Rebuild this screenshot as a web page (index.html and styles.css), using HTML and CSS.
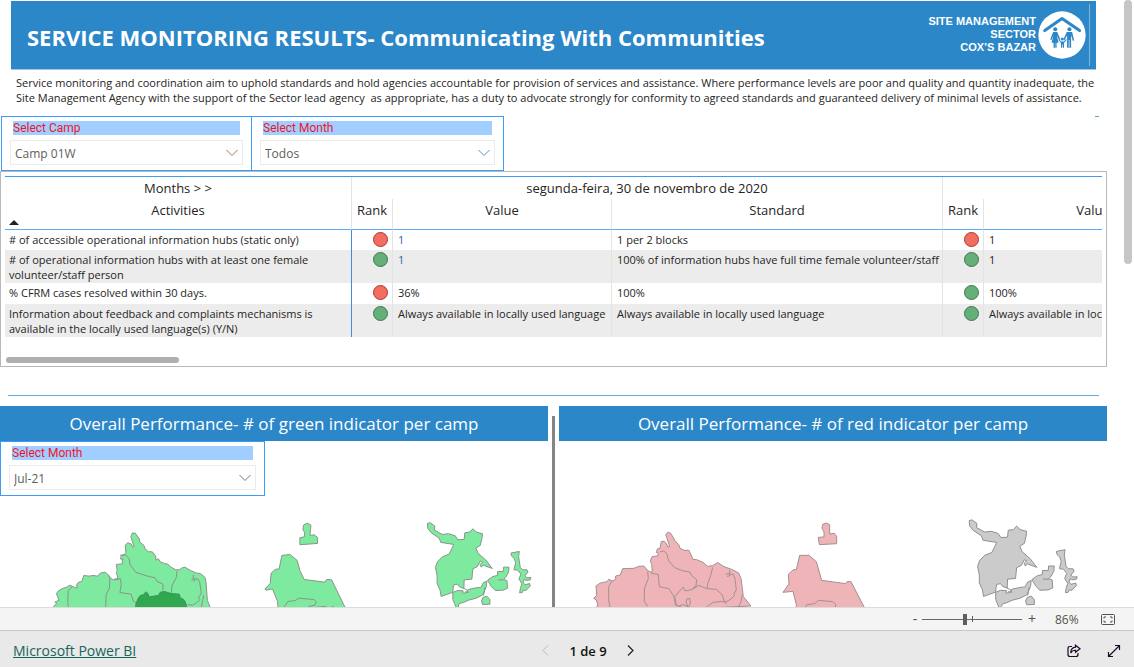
FILE: index.html
```html
<!DOCTYPE html>
<html lang="en">
<head>
<meta charset="utf-8">
<title>Service Monitoring Results</title>
<link rel="stylesheet" href="styles.css">
</head>
<body>
<div class="app">
  <main class="viewport">
    <div class="report">
      <header class="banner">
        <h1 class="banner-title">SERVICE MONITORING RESULTS- Communicating With Communities</h1>
        <div class="brand">
          <p class="brand-name">SITE MANAGEMENT<br>SECTOR<br>COX’S BAZAR</p>
          <svg class="brand-logo" viewBox="0 0 142 142" aria-hidden="true">
            <circle cx="71" cy="71" r="70" fill="#fff"/>
            <path d="M20 58 71 22l52 36" fill="none" stroke="#2b87c8" stroke-width="9" stroke-linecap="round" stroke-linejoin="round"/>
            <g fill="#2b87c8">
              <circle cx="51" cy="54" r="6"/>
              <path d="M45 62h12l9 22-4 2-7-14 6 22h-6v15h-4V94h-1v15h-4V94h-6l6-22-6 14-4-2z"/>
              <circle cx="93" cy="54" r="6"/>
              <path d="M85 62h16l6 25-4 1-5-16v37h-5V86h-2v23h-5V72l-7 14-4-2z"/>
              <circle cx="72" cy="83" r="4.500"/>
              <path d="M62 84l7 6h7l7-7 2 2-8 9v15h-4V99h-2v10h-3V94l-8-8z"/>
            </g>
          </svg>
          <span class="brand-rule"></span>
        </div>
      </header>

      <p class="intro">Service monitoring and coordination aim to uphold standards and hold agencies accountable for provision of services and assistance. Where performance levels are poor and quality and quantity inadequate, the<br>Site Management Agency with the support of the Sector lead agency&nbsp; as appropriate, has a duty to advocate strongly for conformity to agreed standards and guaranteed delivery of minimal levels of assistance.</p>

      <div class="filters">
        <div class="slicer slicer-camp">
          <label class="slicer-label" for="camp">Select Camp</label>
          <div class="slicer-box">
            <select class="slicer-select" id="camp"><option>Camp 01W</option></select>
            <svg class="chevron warm" viewBox="0 0 12 8" aria-hidden="true"><path d="M0.500 1 6 6.500 11.500 1"/></svg>
          </div>
        </div>
        <div class="slicer slicer-month">
          <label class="slicer-label" for="month">Select Month</label>
          <div class="slicer-box">
            <select class="slicer-select" id="month"><option>Todos</option></select>
            <svg class="chevron cool" viewBox="0 0 12 8" aria-hidden="true"><path d="M0.500 1 6 6.500 11.500 1"/></svg>
          </div>
        </div>
        <span class="dash"></span>
      </div>

      <section class="matrix">
        <div class="matrix-clip">
          <table class="grid">
            <colgroup><col class="c-act"><col class="c-rank"><col class="c-val"><col class="c-std"><col class="c-rank"><col class="c-val"></colgroup>
            <thead>
              <tr class="head-top"><th>Months &gt; &gt;</th><th colspan="3">segunda-feira, 30 de novembro de 2020</th><th colspan="2"></th></tr>
              <tr class="head-sub"><th>Activities<span class="sort"></span></th><th>Rank</th><th>Value</th><th>Standard</th><th>Rank</th><th>Value</th></tr>
            </thead>
            <tbody>
              <tr class="first"><th scope="row"># of accessible operational information hubs (static only)</th><td><i class="dot red"></i></td><td class="blue">1</td><td>1 per 2 blocks</td><td><i class="dot red"></i></td><td>1</td></tr>
              <tr class="alt"><th scope="row"># of operational information hubs with at least one female<br>volunteer/staff person</th><td><i class="dot green"></i></td><td class="blue">1</td><td>100% of information hubs have full time female volunteer/staff</td><td><i class="dot green"></i></td><td>1</td></tr>
              <tr><th scope="row">% CFRM cases resolved within 30 days.</th><td><i class="dot red"></i></td><td>36%</td><td>100%</td><td><i class="dot green"></i></td><td>100%</td></tr>
              <tr class="alt"><th scope="row">Information about feedback and complaints mechanisms is<br>available in the locally used language(s) (Y/N)</th><td><i class="dot green"></i></td><td>Always available in locally used language</td><td>Always available in locally used language</td><td><i class="dot green"></i></td><td>Always available in locally used language</td></tr>
            </tbody>
          </table>
        </div>
        <div class="hscroll"></div>
      </section>

      <hr class="rule">

      <div class="panels">
        <section class="panel">
          <h2 class="panel-title">Overall Performance- # of green indicator per camp</h2>
          <div class="slicer slicer-wide">
            <label class="slicer-label" for="month2">Select Month</label>
            <div class="slicer-box">
              <select class="slicer-select" id="month2"><option>Jul-21</option></select>
              <svg class="chevron" viewBox="0 0 12 8" aria-hidden="true"><path d="M0.500 1 6 6.500 11.500 1"/></svg>
            </div>
          </div>
          <svg class="map map-green" viewBox="0 1488 1641 360" role="img" aria-label="Green indicators map">
            <g transform="translate(90 1530)">
              <path transform="translate(4 7)" d="M72 310 66 282l10-9-6-4 13-6-8-19 5-8 12-8 12-3 12-7 12 6 9 3v-7h-3l6-10 11-3 6-18 16 2 12-2 14 2 7-9 14-3 8 6 8 11 9 6 14-1-1-10-4-11 3-6-3-18 19-2-1-11 3-3h-8l2-9 9-3 5-8-2-22 8-7 10 4 5 10 3-3-9-29 4-11h9l12 17 2 10 12 10 3 10 11 9h11l10 13 1 12 7-4 6 9 12 5 10 2 10 9 14 8 11 0 7-5 10-3 16 10 19 8 11 1 14 12 3 15 4 54 12 29 12 20z"/>
              <path class="line" d="M126 229l-12 14-1 30 3 37M235 194l4 9-1 30-10 19-2 50M253 206h18l2 18-4 23 34 5 6 21 20 12M269 136l12-3 8 4 8 9 2 17 17 23 17 6 23 7 18 4 6 10 18 9v19M440 183l-2 19-13 25-2 21M483 210l6-4 5 5-5 3m0-20v12l14 1 5 10 5 32-9 14 5 6-10 8-12 8-15-2m48-28-5 26-4 20"/>
              <path class="hot" d="M318 310l-2-25 7-19 7-10 9-2 8-9 7 6 1 9 29-4 6-10 13-2 19 6 25 2 3 11 10 5 6 10 4 16 4 16-1 10H374l-1-20-4-8-6 6v22z"/>
              <path d="M744 310l-3-36-15-38-19 4-4-3 16-17 3-31 12-11 12-2 8-40 24-3 22 18 8 30 13 27 62 8 5-8 15 1 44 90 7 20z"/>
              <path class="line" d="M760 292l12-18 22-3 11-7 45 4 7 7-4 10-18 4 2 6 22-4 24-2 13 5 13-6"/>
              <path d="M808 104l0-21 14-3v-13l-5-9 2-13 11-6 11 6-1 13-2 18 13-2 10 8v18z"/>
            </g>
            <g transform="translate(1198 1502)">
              <g id="coast">
                <path d="M82 68L90 66 104 76 103 88 126 101 145 99 165 105 173 117 192 116 194 96 209 94 218 84 228 94 247 99 245 114 240 134 227 142 234 158 257 178 276 203 249 193 243 199 240 191 247 184 240 181 232 197 218 204 215 235 192 237 191 263 178 258 172 250 161 252 159 262 158 274 123 287 120 268 111 248 111 225 106 200 112 183 127 168 147 160 161 131 122 125 117 112 93 96 83 83z"/>
                <path d="M158 275L172 269 189 270 187 277 198 276 204 266 233 260 242 260 250 245 260 241 258 258 248 282 228 292 205 298 190 305 178 308 174 316 181 326 170 326 163 308 158 296z"/>
                <path d="M262 238L278 227 292 224 292 212 309 212 310 199 326 199 325 214 316 230 310 236 320 239 322 262 309 268 285 269 273 257z"/>
                <path d="M332 157L357 152 355 168 360 200 367 207 380 207 383 214 374 225 379 231 392 230 390 237 380 239 371 236 369 246 374 252 388 248 390 255 377 269 369 268 366 275 358 276 361 260 365 249 356 235 362 220 352 208 341 207 346 186 342 173 334 166z"/>
                <path d="M248 290L260 286 269 296 269 310 247 311 244 300z"/>
                <path class="line" d="M250 284l4-24M294 237h16M191 263l9 4 4 8-10-2"/>
              </g>
            </g>
          </svg>
        </section>
        <div class="divider"></div>
        <section class="panel">
          <h2 class="panel-title">Overall Performance- # of red indicator per camp</h2>
          <svg class="map map-red" viewBox="1677 1323 1644 520" role="img" aria-label="Red indicators map">
            <g transform="translate(1740 1530)">
              <path d="M46 310l7-28-5-13-7-4 9-9-2-28 13-9 20-4 5-7 12 5 9-5v-10l14-3 7-19 34-1 14-6 15-1 14 15 12 4-2-24-4-9 5-14 19-3-1-9h-5l3-11 8-2 4-21 9 0 7 8 3 9 6-1-8-25-4-10 6-8 8 2 10 15 3 8 12 11 4 12 12 6h15l12 27 11 1 19 8 14 12 14-2 17-9 18 12 23 8 21 11 7 16 7 55 23 28z"/>
              <path class="line" d="M96 213l-10 17v40l6 35M203 185l2 20-12 32v38l10 14M214 190l21 3 3 37 29 6 18 28 4 21 21 9M240 126l11-3 9 7 6 23 18 20 23 9 22 4 5 10 16 13-2 19-11 7M398 172l-6 25-9 24-2 15M438 193l8-3 4 7-9 2m8-18v12l11 0 5 14 4 33-8 13 3 4-12 11-16 8M281 264l16-19 13-14 5 12 23-5 18-12 25 10 28 2 17 16 9 24M283 265l3 20 12 4 9-6 19 8 5-12-1-13-9 0-3 10 9 21M375 310l5-19 20-14 29-3 12 6M486 256l-3 20-5 8-2 18"/>
              <path d="M648 310l1-26-10-40-30 3 18-25-2-29 15-14h9l10-43h28l22 19 16 56 72 10 4-6h12l43 83 10 20z"/>
              <path class="line" d="M670 300l11-16 23-3 11-10 43 4 9 8-2 17"/>
              <path d="M718 104l-3-22 17-1v-15l-6-11 2-12 11-4 10 5 0 28 14-2 7 9v22z"/>
            </g>
            <use class="grey" href="#coast" transform="translate(2822 1491) scale(1.045 1.040)"/>
          </svg>
        </section>
      </div>
    </div>
    <div class="vscroll"></div>
  </main>

  <div class="zoombar">
    <button class="zoom-btn" aria-label="Zoom out">-</button>
    <div class="zoom-track">
      <input class="zoom-range" type="range" min="0" max="100" value="43" aria-label="Zoom">
      <span class="zoom-tick"></span>
    </div>
    <button class="zoom-btn" aria-label="Zoom in">+</button>
    <span class="zoom-value">86%</span>
    <button class="icon-btn" aria-label="Fit to page">
      <svg class="fit" viewBox="0 0 14 11" fill="none" stroke="#55534f" aria-hidden="true"><rect x="0.500" y="0.500" width="13" height="10" rx="1"/><path d="M3 4.500v-1.500h2M9 3h2v1.500M11 6.500v1.500h-2M5 8h-2v-1.500"/></svg>
    </button>
  </div>

  <footer class="footer">
    <a class="powerbi" href="#">Microsoft Power BI</a>
    <nav class="pager">
      <button class="icon-btn" aria-label="Previous page" disabled><svg class="arrow" viewBox="0 0 7 11" fill="none" stroke="#b9b9b9" aria-hidden="true"><path d="M6 0.500 1 5.500l5 5"/></svg></button>
      <span class="page">1 de 9</span>
      <button class="icon-btn" aria-label="Next page"><svg class="arrow" viewBox="0 0 7 11" fill="none" stroke="#222" stroke-width="1.200" aria-hidden="true"><path d="M1 0.500l5 5-5 5"/></svg></button>
    </nav>
    <div class="actions">
      <button class="icon-btn" aria-label="Share"><svg class="action" viewBox="0 0 14 14" fill="none" stroke="#1c0a26" stroke-width="1.200" aria-hidden="true"><path d="M5 2.500H3q-2 0-2 2v6q0 2 2 2h6q2 0 2-2V9"/><path d="M8.500 1.200 13 4.700 8.500 8.200V6.300Q5.500 6 3.700 9 4 3.500 8.500 3.200z"/></svg></button>
      <button class="icon-btn" aria-label="Full screen"><svg class="action" viewBox="0 0 14 14" fill="none" stroke="#1c0a26" stroke-width="1.200" aria-hidden="true"><path d="M1.500 12.500l11-11M8 1.500h4.500V6M1.500 8v4.500H6"/></svg></button>
    </div>
  </footer>
</div>
</body>
</html>
```
FILE: styles.css
```css
* { box-sizing: border-box; }
body {
  margin: 0;
  background: #fff;
  color: #252423;
  font-family: "Open Sans", "Noto Sans", sans-serif;
  font-size: 12px;
}
h1, h2, p { margin: 0; font-weight: 400; }
button { border: 0; padding: 0; background: none; font: inherit; color: inherit; }

.app { display: flex; flex-direction: column; height: 100vh; overflow: hidden; }
.viewport { flex: 1; min-height: 0; display: flex; overflow: hidden; }
.report { flex: 1; min-width: 0; padding-top: 1px; }
.vscroll { width: 8px; height: 264px; margin: 0 2px 0 17px; border-radius: 4px; background: #c6c6c6; }

.banner {
  display: flex;
  justify-content: space-between;
  align-items: center;
  height: 69px;
  margin: 0 11px;
  padding: 0 6px 0 16px;
  background: #2b87c8;
  border-bottom: 1px solid #9cc8e6;
  color: #fff;
}
.banner-title { padding-top: 4px; font-size: 22px; font-weight: 700; line-height: 30px; white-space: nowrap; }
.brand { display: flex; align-items: center; }
.brand-name { padding-bottom: 2px; font: 700 11px/13px "Liberation Sans", sans-serif; text-align: right; }
.brand-logo { width: 48px; height: 48px; margin: 0 3px 0 2px; }
.brand-rule { width: 1px; height: 62px; background: #7db6de; }

.intro { padding: 5px 0 0 16px; font-size: 11px; line-height: 15px; white-space: nowrap; }

.filters { display: flex; align-items: flex-start; margin: 11px 8px 0 1px; }
.slicer { height: 55px; padding: 4px 8px; border: 1px solid #3a9cf6; }
.slicer-camp { width: 250px; border-right: 0; }
.slicer-month { width: 253px; }
.slicer-label {
  display: block;
  margin: 0 3px;
  background: #a0cfff;
  color: #f0142c;
  font: 12px/14px Roboto, sans-serif;
}
.slicer-box { position: relative; margin: 5px 0 0; border: 1px solid #ebebeb; }
.slicer-select {
  display: block;
  width: 100%;
  height: 23px;
  padding: 1px 4px 0;
  appearance: none;
  border: 0;
  background: #fff;
  color: #605e5c;
  font: 12px "Open Sans", sans-serif;
}
.chevron { position: absolute; right: 4px; top: 8px; width: 12px; height: 8px; fill: none; stroke: #777; pointer-events: none; }
.warm { stroke: #b5705a; }
.cool { stroke: #5f97b5; }
.dash { width: 4px; height: 1px; margin-left: auto; background: #5aa5d8; }

.matrix { height: 196px; padding: 4px; border: 1px solid #b8b8b8; }
.matrix-clip { overflow: hidden; border-top: 1px solid #3a9cf6; }
.grid { width: 1198px; table-layout: fixed; border-collapse: separate; border-spacing: 0; }
.c-act { width: 347px; }
.c-rank { width: 41px; }
.c-val { width: 219px; }
.c-std { width: 331px; }
.grid th, .grid td { padding: 2px 5px 0; font-weight: 400; text-align: left; vertical-align: top; line-height: 15px; white-space: nowrap; border-right: 1px solid #e4e4e4; }
.grid thead th { text-align: center; font-size: 13px; }
.head-top th { height: 22px; line-height: 18px; }
.grid .head-sub th { position: relative; height: 31px; padding: 2px 0 0; line-height: 18px; border-bottom: 1px solid #5cacf5; }
.sort { position: absolute; left: 4px; bottom: 4px; border: 5px solid transparent; border-top: 0; border-bottom-color: #222; }
.grid tbody { font-size: 11px; }
.grid tbody tr { height: 21px; }
.grid tbody .first { height: 20px; }
.grid tbody .alt { height: 33px; background: #ececec; }
.grid tbody th { padding-left: 4px; border-right-color: #3a8fdc; }
.grid td:nth-child(2), .grid td:nth-child(5) { padding: 2px 4px 0; text-align: right; line-height: 0; }
.grid .blue { color: #2f5fae; }
.dot { display: inline-block; width: 15px; height: 15px; border-radius: 50%; border: 1px solid; }
.red { background: #f26e60; border-color: #b0352c; }
.green { background: #65b079; border-color: #41764f; }
.hscroll { width: 173px; height: 6px; margin: 20px 0 0 1px; border-radius: 3px; background: #afafaf; }

.rule { height: 1px; margin: 28px 8px 0; border: 0; background: #5fabdd; }

.panels { display: grid; grid-template-columns: 1fr 3px 1fr; column-gap: 4px; margin-top: 10px; }
.panel { min-width: 0; }
.panel-title { height: 35px; background: #2b87c8; color: #fff; font-size: 17px; line-height: 35px; text-align: center; white-space: nowrap; }
.slicer-wide { width: 265px; }
.divider { margin-top: 10px; background: #858585; }
.map { display: block; width: 100%; }
.map path { stroke: #8b9489; stroke-width: 1; vector-effect: non-scaling-stroke; stroke-linejoin: round; }
.map .line { fill: none; }
.map-green { fill: #7dea9f; }
.map-green .hot { fill: #2fa84f; stroke: #3c9454; }
.map-red { fill: #efb4b8; }
.map-red path { stroke: #a29092; }
.grey { fill: #cbcbcb; }

.zoombar { display: flex; align-items: center; height: 23px; padding-right: 19px; justify-content: flex-end; background: #f4f4f4; border-top: 1px solid #dcdcdc; color: #55534f; }
.zoom-btn { width: 10px; font-size: 14px; line-height: 20px; }
.zoom-track { position: relative; display: flex; width: 100px; margin: 0 5px 0 2px; }
.zoom-range { width: 100px; height: 12px; margin: 0; appearance: none; background: linear-gradient(#6a6865, #6a6865) center / 100% 1px no-repeat; }
.zoom-range::-webkit-slider-thumb { appearance: none; width: 4px; height: 11px; background: #605e5c; }
.zoom-tick { position: absolute; left: 50px; top: 3px; width: 1px; height: 6px; background: #605e5c; }
.zoom-value { width: 24px; margin: 0 22px 0 18px; font-size: 12px; }
.icon-btn { display: flex; }
.fit { width: 14px; height: 11px; }

.footer { display: grid; grid-template-columns: 1fr auto 1fr; align-items: center; height: 37px; padding: 3px 13px 0; background: #e9e9e9; border-top: 1px solid #c8c8c8; }
.powerbi { color: #17655a; font-size: 14px; line-height: 20px; }
.pager { display: flex; align-items: center; gap: 20px; padding-left: 42px; }
.page { color: #111; font-size: 13px; font-weight: 600; line-height: 18px; }
.arrow { width: 7px; height: 11px; }
.actions { display: flex; justify-content: flex-end; gap: 26px; }
.action { width: 14px; height: 14px; }
```
